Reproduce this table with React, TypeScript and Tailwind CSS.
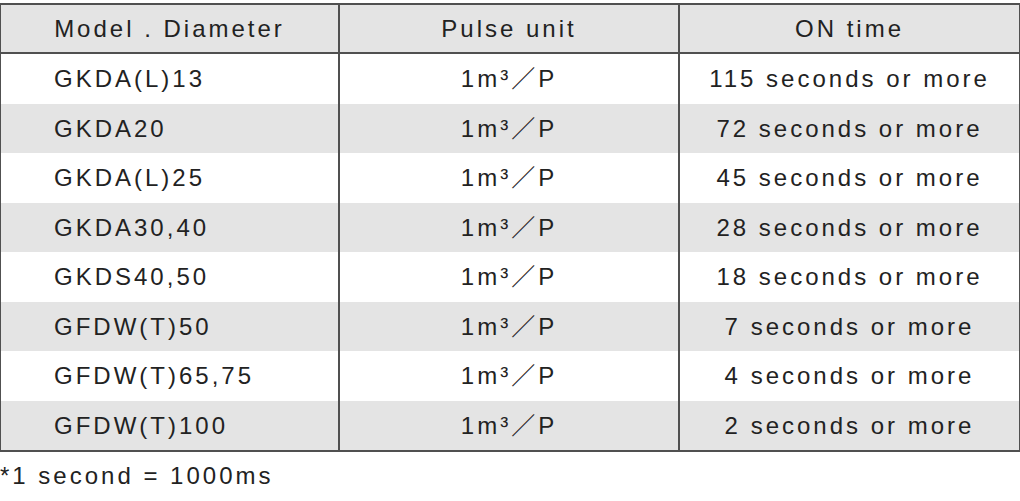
const rows = [
  { model: 'GKDA(L)13', pulse: '1m³／P', on: '115 seconds or more' },
  { model: 'GKDA20', pulse: '1m³／P', on: '72 seconds or more' },
  { model: 'GKDA(L)25', pulse: '1m³／P', on: '45 seconds or more' },
  { model: 'GKDA30,40', pulse: '1m³／P', on: '28 seconds or more' },
  { model: 'GKDS40,50', pulse: '1m³／P', on: '18 seconds or more' },
  { model: 'GFDW(T)50', pulse: '1m³／P', on: '7 seconds or more' },
  { model: 'GFDW(T)65,75', pulse: '1m³／P', on: '4 seconds or more' },
  { model: 'GFDW(T)100', pulse: '1m³／P', on: '2 seconds or more' },
];

export default function App() {
  return (
    <div className="w-[1020px] h-[501px] bg-white pt-[3px] text-[#222] text-[24px] tracking-[3px] font-['Liberation_Sans','Noto_Sans_CJK_JP',sans-serif]">
      {/* Table */}
      <div className="border-y-2 border-x border-[#505050]">
        {/* Header */}
        <div className="flex h-[49px] bg-[#e4e4e4] border-b-2 border-[#505050]">
          <div className="w-[339px] shrink-0 border-r-2 border-[#505050] flex items-center justify-center">
            Model . Diameter
          </div>
          <div className="w-[340px] shrink-0 border-r-2 border-[#505050] flex items-center justify-center">
            Pulse unit
          </div>
          <div className="flex-1 flex items-center justify-center">ON time</div>
        </div>

        {/* Body */}
        {rows.map((r, i) => (
          <div
            key={r.model}
            className={`flex ${i % 2 === 0 ? 'h-[50px] bg-white' : 'h-[49px] bg-[#e4e4e4]'}`}
          >
            <div className="w-[339px] shrink-0 border-r-2 border-[#505050] flex items-center pl-[53px]">
              {r.model}
            </div>
            <div className="w-[340px] shrink-0 border-r-2 border-[#505050] flex items-center justify-center">
              {r.pulse}
            </div>
            <div className="flex-1 flex items-center justify-center">{r.on}</div>
          </div>
        ))}
      </div>

      {/* Footnote */}
      <p className="mt-[9px] leading-[30px]">*1 second = 1000ms</p>
    </div>
  );
}
